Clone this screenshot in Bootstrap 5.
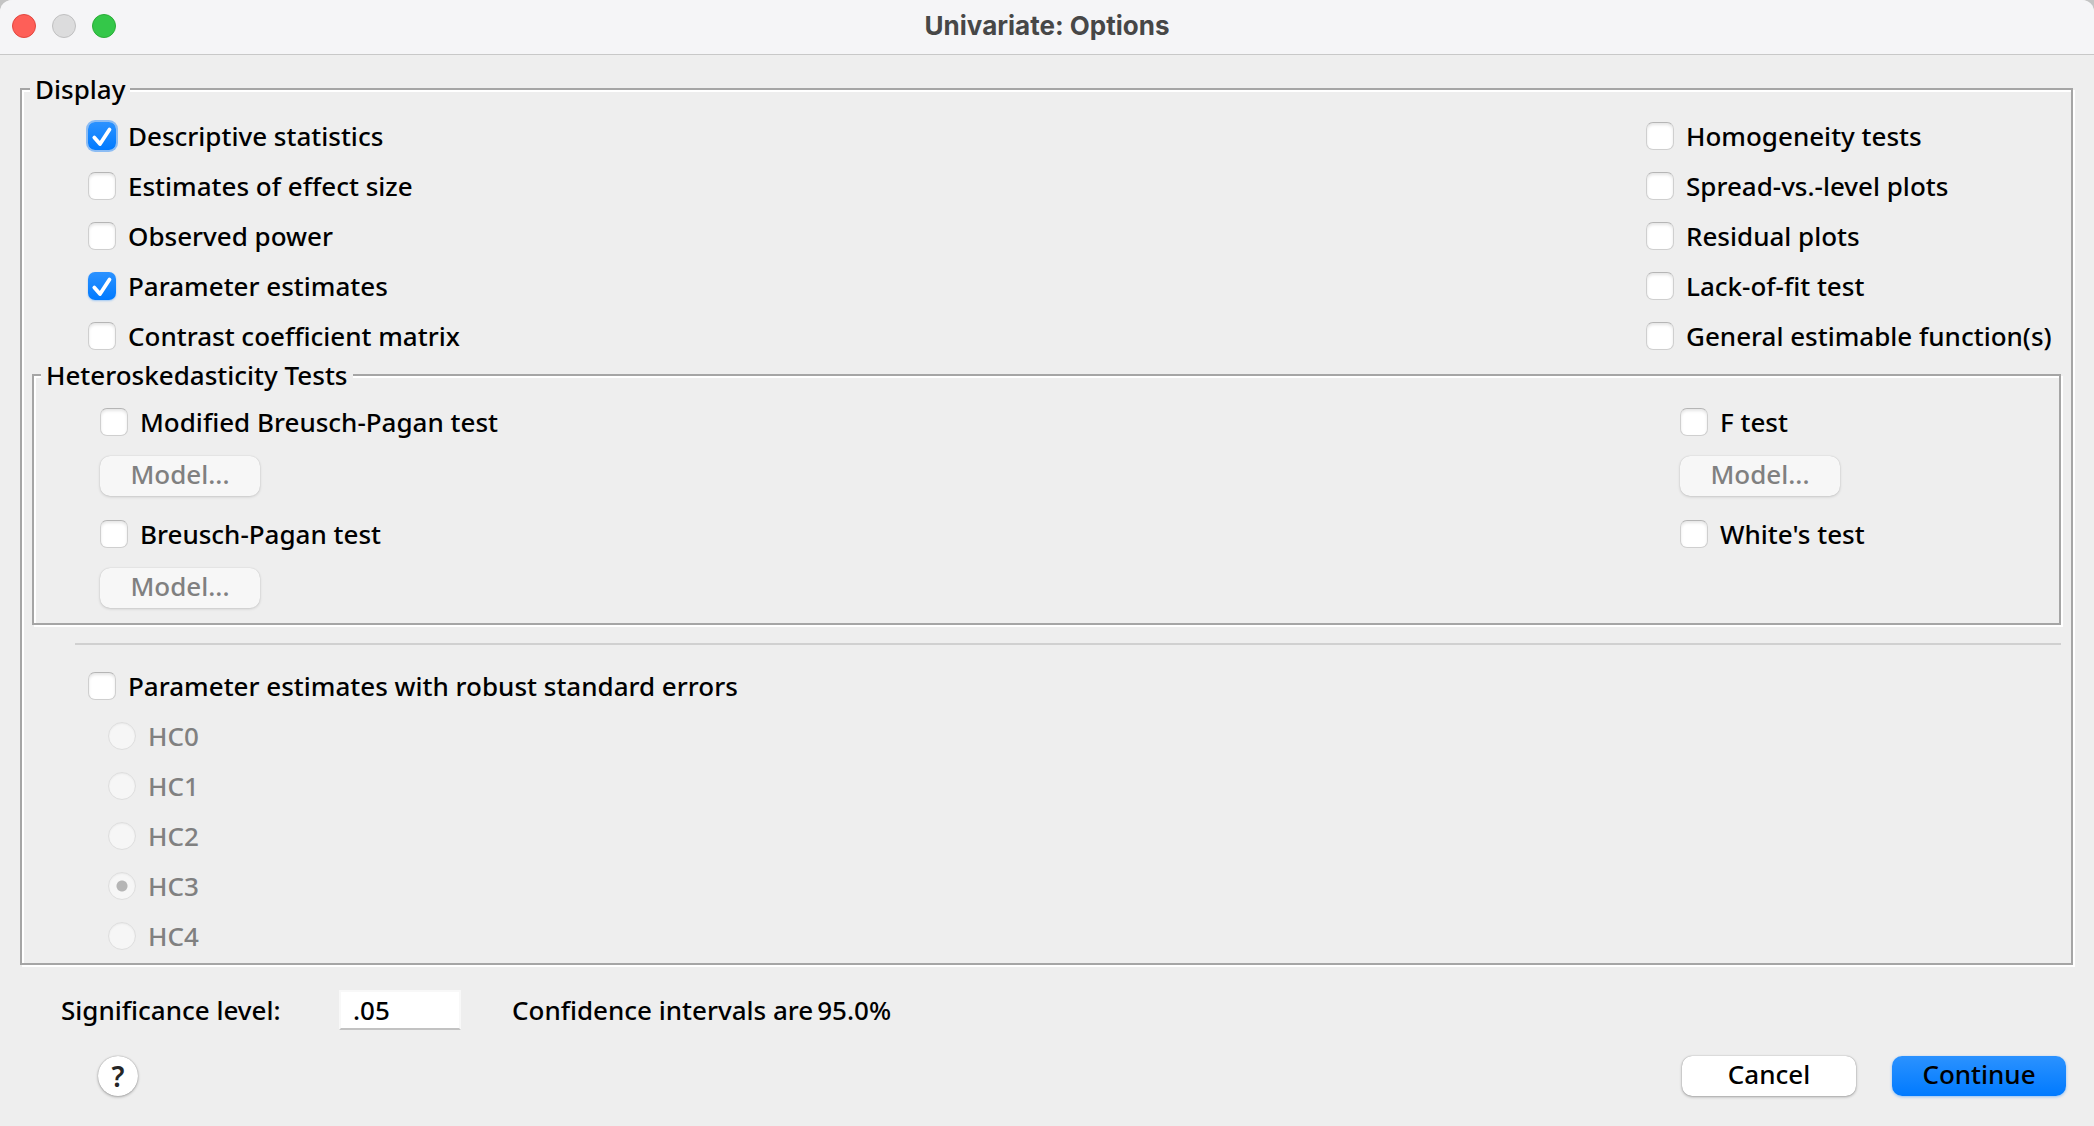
<!DOCTYPE html>
<html lang="en">
<head>
<meta charset="utf-8">
<meta name="viewport" content="width=device-width, initial-scale=1">
<title>Univariate: Options</title>
<link href="https://cdn.jsdelivr.net/npm/bootstrap@5.3.0/dist/css/bootstrap.min.css" rel="stylesheet">
<style>
  body { background: #c4c4c4; color: #000; font: 500 26px/28px "Noto Sans", "Open Sans", sans-serif; }
  .dialog-window { background: #eee; border-radius: 12px 12px 0 0; overflow: hidden; }

  /* Title bar */
  .titlebar { height: 55px; padding: 0 12px 3px; background: #f5f5f7; border-bottom: 1px solid #c8c8c8; }
  .titlebar h1 { font: 700 26px/32px Inter, sans-serif; color: #474747; }
  .lights { flex: 1 1 0; }
  .light { width: 24px; height: 24px; padding: 0; border: 1px solid; border-radius: 50%; }
  .light-close { background: #fe5f58; border-color: #e2463f; }
  .light-min { background: #dcdcdd; border-color: #c0c0c1; }
  .light-zoom { background: #34c749; border-color: #2aad37; }

  /* Etched group boxes */
  .group-box { border: 2px solid #a5a5a5; box-shadow: 2px 2px 0 #fff, inset 2px 2px 0 #fff; }
  .group-box > legend { float: none; width: auto; margin: 0 0 0 8px; padding: 0 5px; font-size: 26px; line-height: 34px; background: #eee; }
  .display-box { margin: 17px 21px 0 20px; padding: 0 10px 13px; }
  .display-box > legend { margin-left: -2px; }
  .display-options { padding: 16px 0 0 56px; }
  .hetero-box { margin-top: 8px; padding: 0 0 15px; }
  .hetero-box > legend { margin-left: 7px; }
  .hetero-options { padding: 16px 0 0 66px; }
  .list-rows { display: flex; flex-direction: column; gap: 22px; }
  .side-column { width: 415px; }
  .hetero-box .side-column { width: 379px; }
  .rule { margin: 18px 0 27px 43px; border-top: 2px solid #d0d0d0; opacity: 1; }
  .robust { padding-left: 56px; }
  .robust-types { padding-left: 20px; }

  /* Check boxes and radios */
  .form-check { display: flex; align-items: center; gap: 12px; min-height: 28px; margin: 0; padding: 0; }
  .form-check .form-check-input { float: none; flex: none; width: 28px; height: 28px; margin: 0; background-color: #fff; border: 1px solid #cfcfcf; border-top-color: #b5b5b5; box-shadow: inset 0 2px 3px #0000001a; }
  .form-check .form-check-input[type=checkbox] { border-radius: 7px; }
  .form-check .form-check-input[type=checkbox]:checked { border: 0; background: url("data:image/svg+xml,%3Csvg xmlns='http://www.w3.org/2000/svg' viewBox='0 0 28 28'%3E%3Cpath d='M6.3 15.6L12 22L21.500 7.500' fill='none' stroke='%23fff' stroke-width='3.8' stroke-linecap='round' stroke-linejoin='round'/%3E%3C/svg%3E") center / 28px 28px no-repeat, linear-gradient(#2b92ff, #007aff); box-shadow: 0 1px 2px #007aff55; }
  .form-check .form-check-input.is-focused:checked { box-shadow: 0 0 0 2px #8cbcf3; }
  .form-check .form-check-input[type=radio]:disabled { opacity: 1; background-color: #f6f6f6; border-color: #dedede; box-shadow: inset 0 1px 2px #0000000d; }
  .form-check .form-check-input[type=radio]:checked { background-image: radial-gradient(circle, #b5b5b5 5px, #b5b5b500 6px); background-size: 100% 100%; }
  .form-check .form-check-input:disabled ~ .form-check-label { opacity: 1; color: #808080; }

  /* Push buttons */
  .push { width: 174px; height: 40px; padding: 0 0 4px; border: 0; border-radius: 10px; font-size: 26px; font-weight: 500; line-height: 36px; color: #000; background: #fff; box-shadow: 0 0 1px #00000066, 0 1px 3px #0000004d; }
  .push:disabled { width: 160px; opacity: 1; color: #808080; background: #f7f7f7; box-shadow: 0 0 1px #00000033, 0 1px 3px #00000026; }
  .push-default { background: linear-gradient(#2b92ff, #007aff); box-shadow: 0 1px 3px #007aff66; }
  .check-push { display: flex; flex-direction: column; align-items: flex-start; gap: 20px; }
  .check-groups { display: flex; flex-direction: column; gap: 24px; }

  /* Lower rows */
  .level-row { padding: 0 61px; margin-top: 25px; }
  .level-input { width: 122px; height: 40px; margin: 0 51px; padding: 0 12px; border: 2px solid #f8f8f8; border-bottom-color: #c2c2c2; border-radius: 0; font-size: 26px; font-weight: 500; line-height: 36px; color: #000; }
  .level-label { min-width: 227px; }
  .actions { padding: 26px 28px 30px 98px; }
  .actions-end { gap: 36px; }
  .help { width: 40px; height: 40px; padding: 0; border: 0; border-radius: 50%; font-size: 28px; line-height: 38px; font-weight: 600; color: #262626; background: #fff; box-shadow: 0 0 1px #00000066, 0 1px 3px #0000004d; }
</style>
<script src="https://cdn.jsdelivr.net/npm/bootstrap@5.3.0/dist/js/bootstrap.bundle.min.js"></script>
</head>
<body>
<div class="dialog-window min-vh-100">
  <header class="titlebar d-flex align-items-center">
    <div class="lights d-flex gap-3">
      <button type="button" class="light light-close" aria-label="Close"></button>
      <button type="button" class="light light-min" aria-label="Minimize" disabled></button>
      <button type="button" class="light light-zoom" aria-label="Zoom"></button>
    </div>
    <h1 class="m-0">Univariate: Options</h1>
    <div class="lights"></div>
  </header>

  <form>
    <fieldset class="group-box display-box">
      <legend>Display</legend>
      <div class="display-options d-flex justify-content-between">
        <div class="list-rows">
          <div class="form-check"><input class="form-check-input is-focused" type="checkbox" id="descriptive" checked><label class="form-check-label" for="descriptive">Descriptive statistics</label></div>
          <div class="form-check"><input class="form-check-input" type="checkbox" id="effect"><label class="form-check-label" for="effect">Estimates of effect size</label></div>
          <div class="form-check"><input class="form-check-input" type="checkbox" id="power"><label class="form-check-label" for="power">Observed power</label></div>
          <div class="form-check"><input class="form-check-input" type="checkbox" id="parameter" checked><label class="form-check-label" for="parameter">Parameter estimates</label></div>
          <div class="form-check"><input class="form-check-input" type="checkbox" id="contrast"><label class="form-check-label" for="contrast">Contrast coefficient matrix</label></div>
        </div>
        <div class="list-rows side-column text-nowrap">
          <div class="form-check"><input class="form-check-input" type="checkbox" id="homogeneity"><label class="form-check-label" for="homogeneity">Homogeneity tests</label></div>
          <div class="form-check"><input class="form-check-input" type="checkbox" id="spread"><label class="form-check-label" for="spread">Spread-vs.-level plots</label></div>
          <div class="form-check"><input class="form-check-input" type="checkbox" id="residual"><label class="form-check-label" for="residual">Residual plots</label></div>
          <div class="form-check"><input class="form-check-input" type="checkbox" id="lack"><label class="form-check-label" for="lack">Lack-of-fit test</label></div>
          <div class="form-check"><input class="form-check-input" type="checkbox" id="general"><label class="form-check-label" for="general">General estimable function(s)</label></div>
        </div>
      </div>

      <fieldset class="group-box hetero-box">
        <legend>Heteroskedasticity Tests</legend>
        <div class="hetero-options d-flex justify-content-between">
          <div class="check-groups">
            <div class="check-push">
              <div class="form-check"><input class="form-check-input" type="checkbox" id="modified"><label class="form-check-label" for="modified">Modified Breusch-Pagan test</label></div>
              <button type="button" class="btn push" disabled>Model...</button>
            </div>
            <div class="check-push">
              <div class="form-check"><input class="form-check-input" type="checkbox" id="breusch"><label class="form-check-label" for="breusch">Breusch-Pagan test</label></div>
              <button type="button" class="btn push" disabled>Model...</button>
            </div>
          </div>
          <div class="check-groups side-column">
            <div class="check-push">
              <div class="form-check"><input class="form-check-input" type="checkbox" id="ftest"><label class="form-check-label" for="ftest">F test</label></div>
              <button type="button" class="btn push" disabled>Model...</button>
            </div>
            <div class="form-check"><input class="form-check-input" type="checkbox" id="white"><label class="form-check-label" for="white">White's test</label></div>
          </div>
        </div>
      </fieldset>

      <hr class="rule">

      <div class="robust list-rows">
        <div class="form-check"><input class="form-check-input" type="checkbox" id="robust"><label class="form-check-label" for="robust">Parameter estimates with robust standard errors</label></div>
        <div class="robust-types list-rows">
          <div class="form-check"><input class="form-check-input" type="radio" name="hc" id="hc0" disabled><label class="form-check-label" for="hc0">HC0</label></div>
          <div class="form-check"><input class="form-check-input" type="radio" name="hc" id="hc1" disabled><label class="form-check-label" for="hc1">HC1</label></div>
          <div class="form-check"><input class="form-check-input" type="radio" name="hc" id="hc2" disabled><label class="form-check-label" for="hc2">HC2</label></div>
          <div class="form-check"><input class="form-check-input" type="radio" name="hc" id="hc3" checked disabled><label class="form-check-label" for="hc3">HC3</label></div>
          <div class="form-check"><input class="form-check-input" type="radio" name="hc" id="hc4" disabled><label class="form-check-label" for="hc4">HC4</label></div>
        </div>
      </div>
    </fieldset>

    <div class="level-row d-flex align-items-center">
      <label class="level-label" for="level">Significance level:</label>
      <input class="form-control level-input" type="text" id="level" value=".05">
      <div class="d-flex gap-1"><span>Confidence intervals are</span><output for="level">95.0%</output></div>
    </div>

    <div class="actions d-flex justify-content-between">
      <button type="button" class="btn help" aria-label="Help">?</button>
      <div class="actions-end d-flex">
        <button type="button" class="btn push">Cancel</button>
        <button type="submit" class="btn push push-default">Continue</button>
      </div>
    </div>
  </form>
</div>
</body>
</html>
